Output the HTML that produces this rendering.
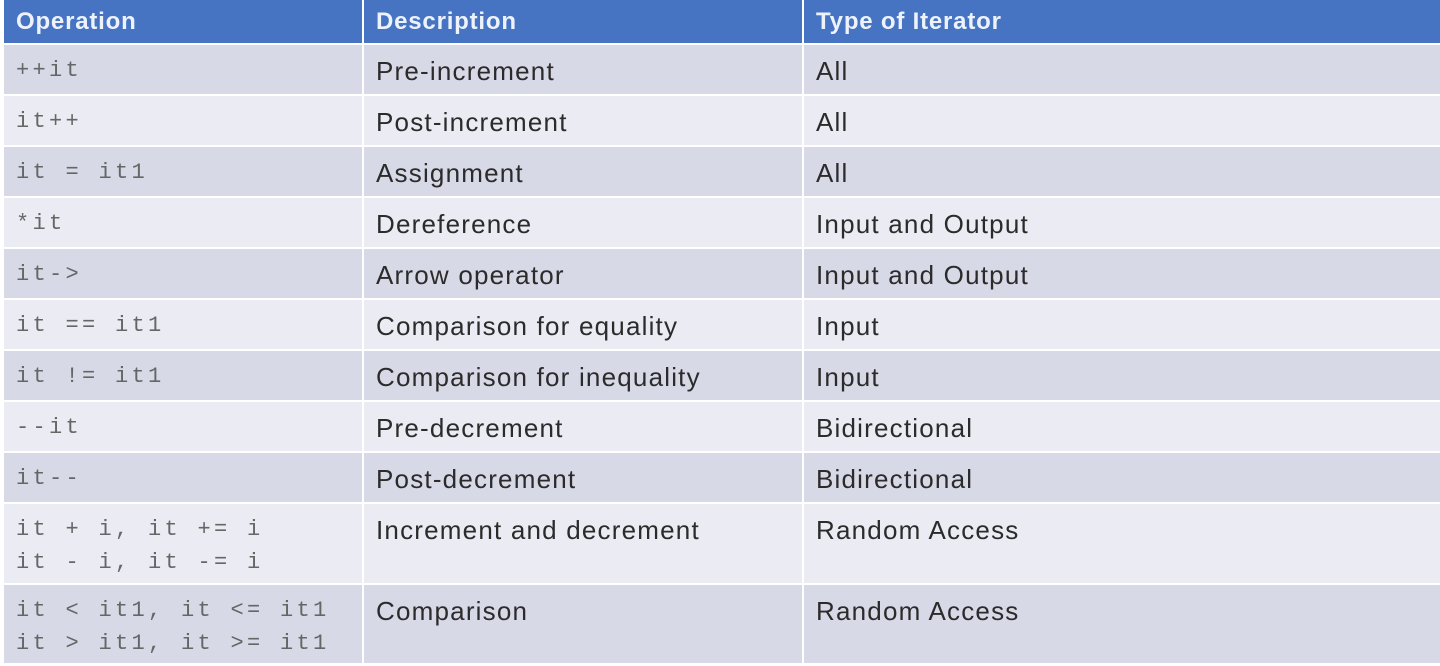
<!DOCTYPE html>
<html><head><style>
html,body{margin:0;padding:0;background:#fff;width:1440px;height:666px;overflow:hidden}
table{position:absolute;left:4px;top:0;border-collapse:separate;border-spacing:2px 2px;margin:-2px 0 0 -2px;width:1440px}
td,th{padding:0 0 0 12px;text-align:left;vertical-align:top;font-family:"Liberation Sans",sans-serif;font-size:26px;letter-spacing:1.2px;color:#2b2b2b}
th{background:#4674c2;color:#eef2fb;height:43px;vertical-align:middle;font-weight:bold;font-size:24px;letter-spacing:0.8px}
tr.o td{background:#d8d9e7}
tr.e td{background:#ebecf3}
td{height:49px;padding-top:11px;box-sizing:border-box}
td.c{font-family:"Liberation Mono",monospace;color:#666;font-size:22px;letter-spacing:3.3px;padding-top:9px;line-height:33px}
</style></head><body>
<table>
<tr><th style="width:346px">Operation</th><th style="width:426px">Description</th><th>Type of Iterator</th></tr>
<tr class="o"><td class="c">++it</td><td>Pre-increment</td><td>All</td></tr>
<tr class="e"><td class="c">it++</td><td>Post-increment</td><td>All</td></tr>
<tr class="o"><td class="c">it = it1</td><td>Assignment</td><td>All</td></tr>
<tr class="e"><td class="c">*it</td><td>Dereference</td><td>Input and Output</td></tr>
<tr class="o"><td class="c">it-&gt;</td><td>Arrow operator</td><td>Input and Output</td></tr>
<tr class="e"><td class="c">it == it1</td><td>Comparison for equality</td><td>Input</td></tr>
<tr class="o"><td class="c">it != it1</td><td>Comparison for inequality</td><td>Input</td></tr>
<tr class="e"><td class="c">--it</td><td>Pre-decrement</td><td>Bidirectional</td></tr>
<tr class="o"><td class="c">it--</td><td>Post-decrement</td><td>Bidirectional</td></tr>
<tr class="e"><td class="c" style="height:79px">it + i, it += i<br>it - i, it -= i</td><td>Increment and decrement</td><td>Random Access</td></tr>
<tr class="o"><td class="c" style="height:78px">it &lt; it1, it &lt;= it1<br>it &gt; it1, it &gt;= it1</td><td>Comparison</td><td>Random Access</td></tr>
</table>
</body></html>
